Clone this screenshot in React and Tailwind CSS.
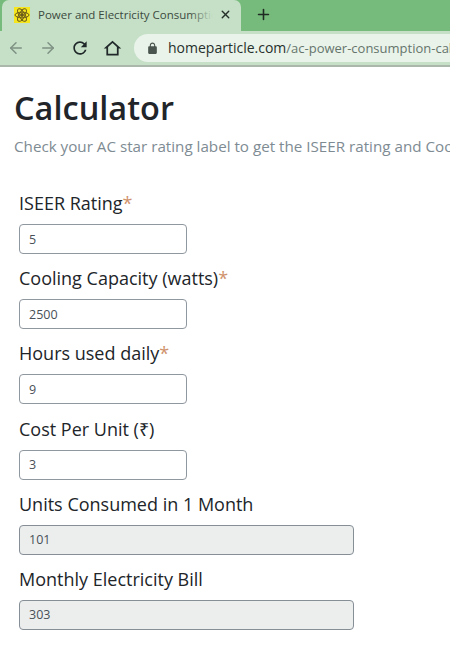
import { ArrowLeft, ArrowRight, X, Plus } from "lucide-react";

const fields = [
  { label: "ISEER Rating", value: "5", required: true },
  { label: "Cooling Capacity (watts)", value: "2500", required: true },
  { label: "Hours used daily", value: "9", required: true },
  { label: "Cost Per Unit (₹)", value: "3" },
  { label: "Units Consumed in 1 Month", value: "101", readOnly: true },
  { label: "Monthly Electricity Bill", value: "303", readOnly: true },
];

function AtomIcon() {
  return (
    <span className="flex h-4 w-4 shrink-0 items-center justify-center bg-[#f5e61e]">
      <svg viewBox="0 0 16 16" className="h-4 w-4" fill="none" stroke="#6b5a1a" strokeWidth="1">
        <ellipse cx="8" cy="8" rx="7" ry="2.8" />
        <ellipse cx="8" cy="8" rx="7" ry="2.8" transform="rotate(60 8 8)" />
        <ellipse cx="8" cy="8" rx="7" ry="2.8" transform="rotate(120 8 8)" />
        <circle cx="8" cy="8" r="1.4" fill="#6b5a1a" />
      </svg>
    </span>
  );
}

function ToolButton({ children }) {
  return <span className="flex w-[32px] shrink-0 items-center justify-center">{children}</span>;
}

function Field({ label, value, required, readOnly }) {
  return (
    <div className="flex flex-col">
      <label className="h-[33px] text-[18px] leading-[24px] text-[#212529]">
        {label}
        {required && <span className="text-[#d0926c]">*</span>}
      </label>
      <input
        readOnly
        value={value}
        className={
          readOnly
            ? "h-[30px] w-[335px] rounded-[4px] border border-[#868e96] bg-[#eceeee] px-[9px] text-[12.5px] text-[#495057] outline-none"
            : "h-[30px] w-[168px] rounded-[4px] border border-[#8f979f] bg-white px-[9px] text-[12.5px] text-[#495057] outline-none"
        }
      />
    </div>
  );
}

export default function App() {
  return (
    <div className="h-[664px] w-[450px] overflow-hidden whitespace-nowrap bg-white font-['Open_Sans',sans-serif]">
      {/* tab strip */}
      <div className="flex h-[31px] items-end bg-[#77bb7c] pl-[2px]">
        <div className="flex h-[31px] w-[239px] shrink-0 items-center rounded-t-[7px] bg-[#c5e0c7] pb-[2px] pl-[12px]">
          <AtomIcon />
          <span className="relative ml-[8px] w-[175px] overflow-hidden text-[11.5px] text-[#3c4a40]">
            Power and Electricity Consumption
            <span className="absolute inset-y-0 right-0 w-[24px] bg-linear-to-r from-transparent to-[#c5e0c7]" />
          </span>
          <X size={13} strokeWidth={2.5} className="ml-[6px] shrink-0 text-[#26302a]" />
        </div>
        <Plus size={17} strokeWidth={2.2} className="mb-[8px] ml-[14px] shrink-0 text-[#1f2a22]" />
      </div>

      {/* toolbar */}
      <div className="flex h-[34px] items-center bg-[#c5e0c7]">
        <ToolButton>
          <ArrowLeft size={18} strokeWidth={2} className="text-[#7f9184]" />
        </ToolButton>
        <ToolButton>
          <ArrowRight size={18} strokeWidth={2} className="text-[#7f9184]" />
        </ToolButton>
        <ToolButton>
          <svg viewBox="0 0 24 24" className="h-[20px] w-[20px] fill-[#20282a]">
            <path d="M17.65 6.35A7.958 7.958 0 0 0 12 4c-4.42 0-7.99 3.58-7.99 8s3.57 8 7.99 8c3.73 0 6.84-2.55 7.73-6h-2.08A5.99 5.99 0 0 1 12 18c-3.31 0-6-2.69-6-6s2.69-6 6-6c1.66 0 3.14.69 4.22 1.78L13 11h7V4l-2.35 2.35z" />
          </svg>
        </ToolButton>
        <ToolButton>
          <svg viewBox="0 0 24 24" className="h-[21px] w-[21px] fill-[#20282a]">
            <path d="M12 5.69l5 4.5V18H7v-7.81l5-4.5M12 3L2 12h3v8h14v-8h3L12 3z" />
          </svg>
        </ToolButton>
        <div className="ml-[6px] flex h-[28px] flex-1 items-center overflow-hidden rounded-l-[14px] bg-[#e9f3ea] pl-[12px] text-[14px]">
          <svg viewBox="0 0 24 24" className="h-[13px] w-[13px] shrink-0 fill-[#4a5550]">
            <path d="M18 8h-1V6c0-2.76-2.24-5-5-5S7 3.24 7 6v2H6c-1.1 0-2 .9-2 2v10c0 1.1.9 2 2 2h12c1.1 0 2-.9 2-2V10c0-1.1-.9-2-2-2zM9 6c0-1.66 1.34-3 3-3s3 1.34 3 3v2H9V6z" />
          </svg>
          <span className="ml-[9px] text-[#27302c]">
            homeparticle.com<span className="text-[13px] text-[#66756c]">/ac-power-consumption-calculator</span>
          </span>
        </div>
      </div>
      <div className="h-[2px] bg-[#a9b8ab]" />

      {/* page */}
      <div className="pl-[14px] pt-[20px]">
        <h1 className="text-[32.5px] font-semibold leading-[42px] text-[#212529]">Calculator</h1>
        <p className="mt-[7px] text-[15.2px] leading-[20px] text-[#7e8b93]">
          Check your AC star rating label to get the ISEER rating and Cooling Capacity
        </p>
      </div>
      <div className="flex flex-col gap-[12.2px] pl-[19px] pt-[35px]">
        {fields.map((f) => (
          <Field key={f.label} {...f} />
        ))}
      </div>
    </div>
  );
}
